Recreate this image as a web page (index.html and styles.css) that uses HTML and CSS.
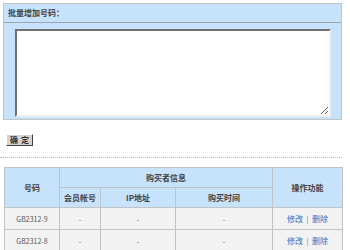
FILE: index.html
```html
<!DOCTYPE html>
<html lang="zh-CN">
  <head>
    <meta charset="UTF-8" />
    <title>批量增加号码</title>
    <link rel="stylesheet" href="styles.css">
  </head>
  <body>
    <div class="panel">
      <div class="panel-head">批量增加号码：</div>
      <div class="panel-body">
        <textarea class="numbers"></textarea>
      </div>
    </div>

    <div class="actions">
      <button class="btn">确 定</button>
    </div>

    <div class="divider"></div>

    <table class="list">
      <colgroup>
        <col class="c-code" />
        <col class="c-member" />
        <col class="c-ip" />
        <col class="c-time" />
        <col class="c-op" />
      </colgroup>
      <tr class="head">
        <th rowspan="2">号码</th>
        <th colspan="3">购买者信息</th>
        <th rowspan="2">操作功能</th>
      </tr>
      <tr class="head sub">
        <th>会员帐号</th>
        <th>IP地址</th>
        <th>购买时间</th>
      </tr>
      <tr>
        <td>GB2312-9</td>
        <td>-</td>
        <td>-</td>
        <td>-</td>
        <td><a href="#">修改</a> <span class="sep">|</span> <a href="#">删除</a></td>
      </tr>
      <tr>
        <td>GB2312-8</td>
        <td>-</td>
        <td>-</td>
        <td>-</td>
        <td><a href="#">修改</a> <span class="sep">|</span> <a href="#">删除</a></td>
      </tr>
    </table>
  </body>
</html>
```

FILE: styles.css
```css
body {
  margin: 0;
  padding: 3px 0 0 0;
  font-family: "Noto Sans CJK SC", "DejaVu Sans", sans-serif;
  font-size: 8px;
  color: #333;
  background: #fff;
}
.panel {
  margin-left: 3px;
  width: 337px;
  border: 1px solid #c4c4c4;
  background: #c7e2fb;
}
.panel-head {
  height: 18px;
  line-height: 18px;
  padding-left: 4px;
  font-size: 8px;
  font-weight: bold;
  color: #444;
  border-bottom: 1px solid #9aa5b0;
}
.panel-body {
  padding: 6px 9px 2px 11px;
}
.numbers {
  display: block;
  box-sizing: border-box;
  width: 316px;
  height: 88px;
  margin: 0;
  resize: both;
  background: #fff;
  border: 2px solid;
  border-color: #707070 #f0f0f0 #f0f0f0 #707070;
}
.actions {
  padding: 14px 0 0 6px;
  height: 12px;
}
.btn {
  display: block;
  box-sizing: border-box;
  width: 27px;
  height: 12px;
  padding: 0;
  font-family: "Noto Sans CJK SC", sans-serif;
  font-size: 8px;
  line-height: 10px;
  font-weight: bold;
  word-spacing: 1px;
  color: #333;
  background: #d6d3ce;
  border: 1px solid;
  border-color: #fff #404040 #404040 #fff;
}
.divider {
  margin-top: 11px;
  width: 342px;
  border-top: 1px dotted #bbb;
}
.list {
  margin: 9px 0 0 4px;
  width: 338px;
  border-collapse: collapse;
  table-layout: fixed;
}
.c-code { width: 55px; }
.c-member { width: 41px; }
.c-ip { width: 75px; }
.c-time { width: 97px; }
.c-op { width: 70px; }
.list th,
.list td {
  border: 1px solid #bfc4c9;
  height: 19px;
  padding: 0;
  text-align: center;
  font-size: 8px;
  line-height: 10px;
}
.list th {
  background: #c7e2fb;
  color: #444;
}
.list td {
  height: 21px;
  background: #f2f2f2;
  color: #555;
  font-size: 7px;
}
.list a {
  color: #3a6bc4;
  text-decoration: none;
  font-size: 8px;
}
.sep {
  color: #3a6bc4;
  margin: 0 2px;
}
```
